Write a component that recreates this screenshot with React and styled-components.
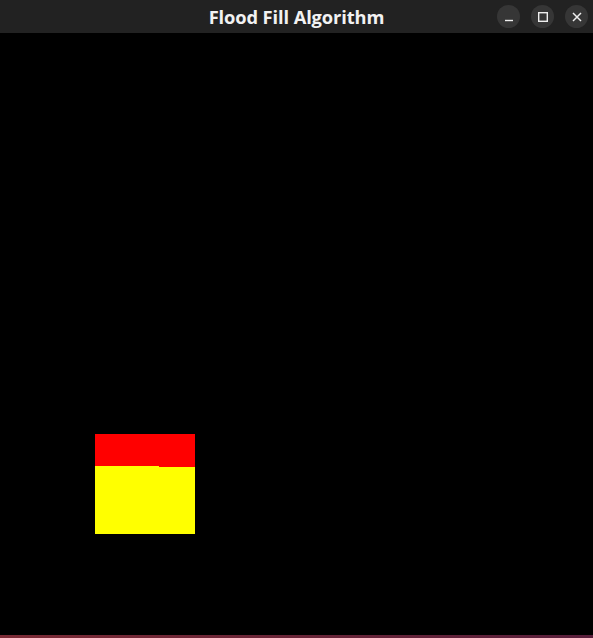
import React from "react";
import styled, { createGlobalStyle } from "styled-components";

const GlobalStyle = createGlobalStyle`
  html, body {
    margin: 0;
    padding: 0;
    background: #000;
  }
  #root {
    height: 100vh;
  }
`;

function WindowButton({ kind }) {
  return (
    <Circle>
      <svg width="12" height="12" viewBox="0 0 12 12">
        {kind === "min" && <line x1="2" y1="9.5" x2="10" y2="9.5" stroke="#eee" strokeWidth="1.4" />}
        {kind === "max" && <rect x="1.7" y="1.7" width="8.6" height="8.6" fill="none" stroke="#eee" strokeWidth="1.4" />}
        {kind === "close" && (
          <path d="M2 2 L10 10 M10 2 L2 10" stroke="#eee" strokeWidth="1.5" />
        )}
      </svg>
    </Circle>
  );
}

function App() {
  return (
    <>
      <GlobalStyle />
      <Window>
        <TitleBar>
          <Title>Flood Fill Algorithm</Title>
          <Controls>
            <WindowButton kind="min" />
            <WindowButton kind="max" />
            <WindowButton kind="close" />
          </Controls>
        </TitleBar>
        <Canvas>
          <svg width="593" height="602" viewBox="0 0 593 602" shapeRendering="crispEdges">
            {/* filled square, canvas coords (title bar is 33px) */}
            <rect x="95" y="401" width="100" height="100" fill="#ffff00" />
            <rect x="95" y="401" width="64" height="32" fill="#ff0000" />
            <rect x="159" y="401" width="36" height="33" fill="#ff0000" />
          </svg>
        </Canvas>
        <BottomEdge />
      </Window>
    </>
  );
}

export default App;

const Window = styled.div`
  height: 638px;
  width: 593px;
  display: flex;
  flex-direction: column;
  background: #000;
  overflow: hidden;
`;

const TitleBar = styled.div`
  height: 33px;
  flex: none;
  background: #222222;
  position: relative;
  display: flex;
  align-items: center;
  justify-content: center;
`;

const Title = styled.div`
  color: #f2f2f2;
  font-family: "Open Sans", "Noto Sans", sans-serif;
  font-weight: 700;
  font-size: 18.3px;
  letter-spacing: -0.1px;
  margin-left: 0px;
  margin-top: -1px;
`;

const Controls = styled.div`
  position: absolute;
  right: 5px;
  top: 5px;
  display: flex;
  gap: 11px;
`;

const Circle = styled.div`
  width: 23px;
  height: 23px;
  border-radius: 50%;
  background: #363636;
  display: flex;
  align-items: center;
  justify-content: center;
`;

const Canvas = styled.div`
  flex: 1;
  background: #000;
  svg {
    display: block;
  }
`;

const BottomEdge = styled.div`
  height: 3px;
  flex: none;
  background: linear-gradient(to right, #7c2b36, #6a2538 50%, #5a1f3c);
`;
